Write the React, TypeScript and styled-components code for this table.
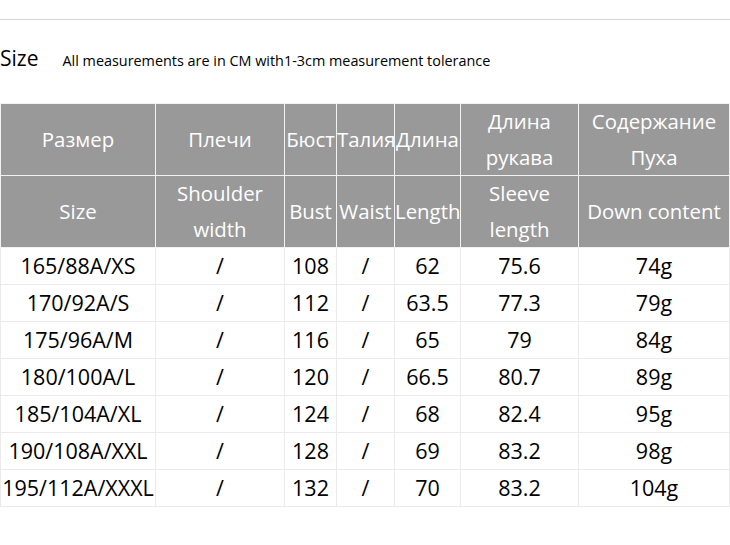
import React from 'react';
import styled, { createGlobalStyle } from 'styled-components';

const GlobalStyle = createGlobalStyle`
  html, body {
    margin: 0;
    padding: 0;
    background: #ffffff;
  }
  body {
    font-family: "Open Sans", "Noto Sans", Arial, sans-serif;
  }
`;

const Page = styled.div`
  width: 730px;
  padding-top: 19px;
`;

const Divider = styled.div`
  height: 1px;
  background: #d4d4d4;
`;

const Heading = styled.div`
  display: flex;
  align-items: baseline;
  gap: 24px;
  height: 83px;
  padding-top: 24px;
  box-sizing: border-box;
  color: #000;
`;

const Title = styled.span`
  font-size: 21px;
`;

const Note = styled.span`
  font-size: 14.4px;
`;

const Table = styled.table`
  border-collapse: collapse;
  table-layout: fixed;
  width: 729px;
`;

const HeadCell = styled.th`
  background: #999999;
  color: #ffffff;
  font-weight: 400;
  font-size: 20.4px;
  line-height: 35.5px;
  height: 71px;
  padding: 0;
  text-align: center;
  border: 1px solid #f2f2f2;
  white-space: nowrap;
  overflow: hidden;
`;

const Cell = styled.td`
  color: #000;
  font-size: 21.5px;
  line-height: 34px;
  height: 36px;
  padding: 0;
  text-align: center;
  vertical-align: middle;
  border: 1px solid #ebebeb;
  white-space: nowrap;
`;

const widths = [155, 129, 52, 58, 66, 118, 151];

const headRu = ['Размер', 'Плечи', 'Бюст', 'Талия', 'Длина', ['Длина', 'рукава'], ['Содержание', 'Пуха']];
const headEn = ['Size', ['Shoulder', 'width'], 'Bust', 'Waist', 'Length', ['Sleeve', 'length'], 'Down content'];

const rows = [
  ['165/88A/XS', '/', '108', '/', '62', '75.6', '74g'],
  ['170/92A/S', '/', '112', '/', '63.5', '77.3', '79g'],
  ['175/96A/M', '/', '116', '/', '65', '79', '84g'],
  ['180/100A/L', '/', '120', '/', '66.5', '80.7', '89g'],
  ['185/104A/XL', '/', '124', '/', '68', '82.4', '95g'],
  ['190/108A/XXL', '/', '128', '/', '69', '83.2', '98g'],
  ['195/112A/XXXL', '/', '132', '/', '70', '83.2', '104g'],
];

const renderHead = (items: (string | string[])[]) =>
  items.map((item, i) => (
    <HeadCell key={i}>
      {Array.isArray(item) ? (
        <>
          {item[0]}
          <br />
          {item[1]}
        </>
      ) : (
        item
      )}
    </HeadCell>
  ));

const App = () => {
  return (
    <Page>
      <GlobalStyle />
      <Divider />
      <Heading>
        <Title>Size</Title>
        <Note>All measurements are in CM with1-3cm measurement tolerance</Note>
      </Heading>
      <Table>
        <colgroup>
          {widths.map((w, i) => (
            <col key={i} style={{ width: w }} />
          ))}
        </colgroup>
        <thead>
          <tr>{renderHead(headRu)}</tr>
          <tr>{renderHead(headEn)}</tr>
        </thead>
        <tbody>
          {rows.map((row, r) => (
            <tr key={r}>
              {row.map((v, c) => (
                <Cell key={c}>{v}</Cell>
              ))}
            </tr>
          ))}
        </tbody>
      </Table>
    </Page>
  );
};

export default App;
